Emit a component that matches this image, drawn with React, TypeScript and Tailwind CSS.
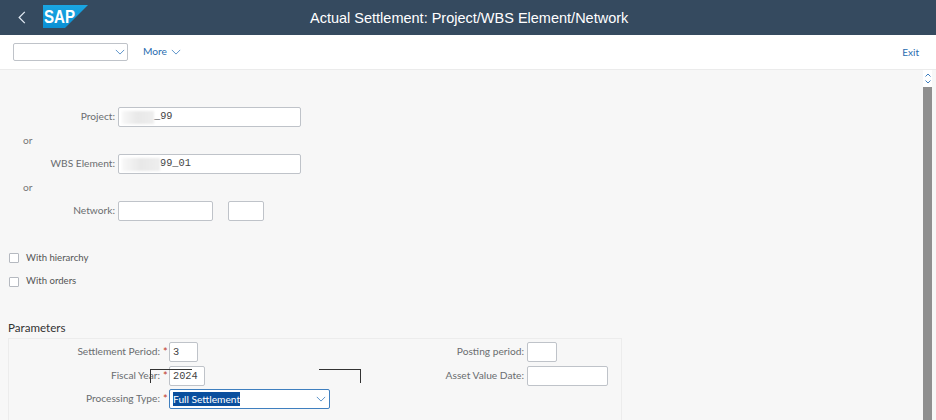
import React from "react";

const inputCls = "h-[20px] shrink-0 rounded-[2px] border border-[#bfc3c9] bg-white";

function Label({ w, children }: { w: string; children: React.ReactNode }) {
  return <div className={`${w} shrink-0 text-right text-[10.2px] text-[#6a6d70]`}>{children}</div>;
}

function Blur({ w }: { w: string }) {
  return <span className={`${w} inline-block h-[13px] bg-gradient-to-r from-[#f8f8f8] via-[#e8e8e8] to-[#eeeeee] blur-[1px]`} />;
}

function Chevron({ className }: { className: string }) {
  return (
    <svg viewBox="0 0 12 7" className={className} fill="none" stroke="currentColor" strokeWidth="1">
      <path d="M1 1l5 5 5-5" />
    </svg>
  );
}

function Check({ label, cls }: { label: string; cls: string }) {
  return (
    <div className={`flex items-center ${cls}`}>
      <div className="h-[10px] w-[10px] rounded-[1px] border border-[#b5b9c0] bg-white" />
      <span className="ml-[7px] text-[9.6px] text-[#555]">{label}</span>
    </div>
  );
}

export default function App() {
  return (
    <div className="flex h-[420px] w-[936px] flex-col overflow-hidden bg-[#f7f7f7] font-['Lato',sans-serif]">
      <header className="relative flex h-[35px] shrink-0 items-center bg-[#354a5f]">
        <svg viewBox="0 0 10 16" className="ml-[18px] h-[13px] w-[8px]" fill="none" stroke="#dfe8f1" strokeWidth="1.6">
          <path d="M8.5 1L1.5 8l7 7" />
        </svg>
        <svg viewBox="0 0 45 23" className="ml-[17px] mt-[-2px] h-[23px] w-[45px]">
          <defs>
            <linearGradient id="sapg" x1="0" y1="0" x2="0" y2="1">
              <stop offset="0" stopColor="#1aa6e2" />
              <stop offset="1" stopColor="#0a8fd4" />
            </linearGradient>
          </defs>
          <polygon points="0,0 45,0 22,23 0,23" fill="url(#sapg)" />
          <text x="1" y="17.5" fill="#fff" fontFamily="'Liberation Sans',sans-serif" fontWeight="700" fontSize="19" textLength="31" lengthAdjust="spacingAndGlyphs">SAP</text>
        </svg>
        <h1 className="absolute left-[310px] top-[8px] whitespace-nowrap font-['Liberation_Sans',sans-serif] text-[14.5px] leading-[20px] font-normal text-white">
          Actual Settlement: Project/WBS Element/Network
        </h1>
      </header>

      <nav className="flex h-[35px] shrink-0 items-center border-b border-[#ebebeb] bg-white pl-[13px] pr-[17px]">
        <div className="flex h-[18px] w-[115px] items-center justify-end rounded-[2px] border border-[#bfc3c9] bg-white pr-[2px]">
          <Chevron className="h-[6px] w-[10px] text-[#3f7fbf]" />
        </div>
        <span className="ml-[15px] text-[10.2px] text-[#2a6cb0]">More</span>
        <Chevron className="ml-[4px] h-[6px] w-[10px] text-[#3f7fbf]" />
        <span className="ml-auto text-[10px] text-[#2a6cb0]">Exit</span>
      </nav>

      <div className="flex min-h-0 flex-1">
        <main className="min-w-0 flex-1 pt-[37px] pl-[8px]">
          <div className="flex items-center">
            <Label w="w-[107px]">Project:</Label>
            <div className={`${inputCls} ml-[3px] flex w-[183px] items-center pl-[3px] font-['Liberation_Mono',monospace] text-[10.3px] text-[#444]`}>
              <Blur w="w-[32px]" />_99
            </div>
          </div>
          <div className="mt-[8px] pl-[15px] text-[10.2px] leading-[11px] text-[#777]">or</div>
          <div className="mt-[8px] flex items-center">
            <Label w="w-[107px]">WBS Element:</Label>
            <div className={`${inputCls} ml-[3px] flex w-[183px] items-center pl-[3px] font-['Liberation_Mono',monospace] text-[10.3px] text-[#444]`}>
              <Blur w="w-[38px]" />99_01
            </div>
          </div>
          <div className="mt-[8px] pl-[15px] text-[10.2px] leading-[11px] text-[#777]">or</div>
          <div className="mt-[8px] flex items-center">
            <Label w="w-[107px]">Network:</Label>
            <div className={`${inputCls} ml-[3px] w-[95px]`} />
            <div className={`${inputCls} ml-[15px] w-[36px]`} />
          </div>
          <Check label="With hierarchy" cls="mt-[30px] ml-[1px]" />
          <Check label="With orders" cls="mt-[9px] ml-[1px]" />

          <h2 className="mt-[31px] text-[11.6px] leading-[16px] font-normal text-[#333]">Parameters</h2>
          <section className="relative mt-[2px] h-[90px] w-[614px] border border-[#ececec] pt-[3px]">
            <div className="flex items-center">
              <Label w="w-[151px]">Settlement Period:</Label>
              <span className="w-[9px] pl-[3px] text-[11px] text-[#c0392b]">*</span>
              <div className={`${inputCls} w-[29px] pl-[3px] font-['Liberation_Mono',monospace] text-[10.3px] leading-[18px] text-[#444]`}>3</div>
              <Label w="w-[326px]">Posting period:</Label>
              <div className={`${inputCls} ml-[3px] w-[30px]`} />
            </div>
            <div className="mt-[4px] flex items-center">
              <Label w="w-[151px]">Fiscal Year:</Label>
              <span className="w-[9px] pl-[3px] text-[11px] text-[#c0392b]">*</span>
              <div className={`${inputCls} w-[36px] pl-[3px] font-['Liberation_Mono',monospace] text-[10.3px] leading-[18px] text-[#444]`}>2024</div>
              <Label w="w-[319px]">Asset Value Date:</Label>
              <div className={`${inputCls} ml-[3px] w-[81px]`} />
            </div>
            <div className="mt-[3px] flex items-center">
              <Label w="w-[151px]">Processing Type:</Label>
              <span className="w-[9px] pl-[3px] text-[11px] text-[#c0392b]">*</span>
              <div className="flex h-[20px] w-[161px] items-center rounded-[2px] border border-[#3f7fbf] bg-white pr-[3px] pl-[3px]">
                <span className="bg-[#0a4f9e] text-[10.2px] leading-[14px] text-white">Full Settlement</span>
                <Chevron className="ml-auto h-[6px] w-[10px] text-[#3f7fbf]" />
              </div>
            </div>
            <div className="absolute left-[141px] top-[30px] h-[14px] w-[42px] border-t border-l border-[#333]" />
            <div className="absolute left-[310px] top-[30px] h-[14px] w-[42px] border-t border-r border-[#333]" />
          </section>
        </main>
        <aside className="flex w-[13px] shrink-0 flex-col pr-[4px]">
          <div className="flex h-[17px] w-[9px] flex-col items-center justify-center gap-[3px] bg-white">
            <svg viewBox="0 0 6 4" className="h-[4px] w-[6px]" fill="none" stroke="#3f7fbf"><path d="M.5 3.5L3 1l2.5 2.5" /></svg>
            <svg viewBox="0 0 6 4" className="h-[4px] w-[6px]" fill="none" stroke="#3f7fbf"><path d="M.5.5L3 3 5.5.5" /></svg>
          </div>
          <div className="w-[9px] flex-1 bg-[#8f8f8f]" />
        </aside>
      </div>
    </div>
  );
}
